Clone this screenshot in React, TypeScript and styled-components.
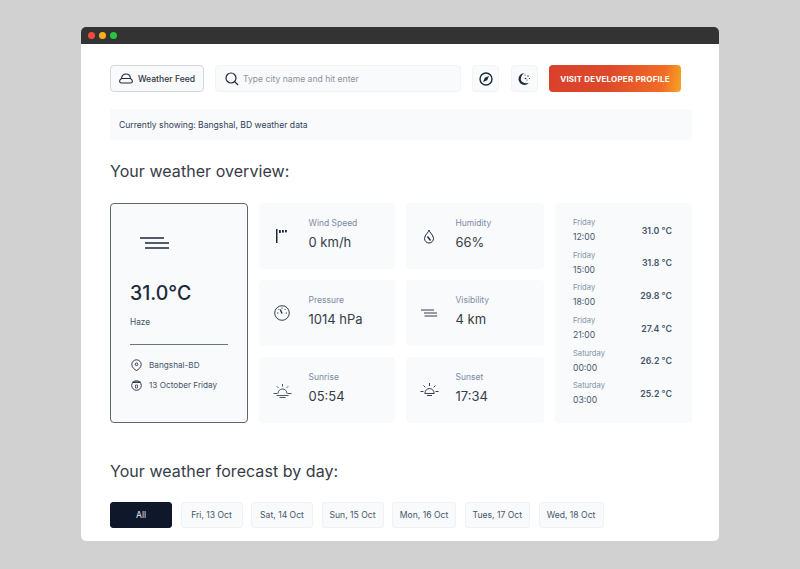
import React from 'react';
import styled, { createGlobalStyle } from 'styled-components';

const GlobalStyle = createGlobalStyle`
  html, body {
    margin: 0;
    padding: 0;
    background: #d1d1d1;
    font-family: Inter, "Liberation Sans", sans-serif;
  }
`;

const Page = styled.div`
  width: 800px;
  height: 569px;
  box-sizing: border-box;
  padding: 27px 81px 28px;
  overflow: hidden;
`;

const Window = styled.div`
  height: 514px;
  background: #fff;
  border-radius: 5px;
  overflow: hidden;
`;

const TitleBar = styled.div`
  height: 17px;
  background: #333333;
  display: flex;
  align-items: center;
  gap: 4px;
  padding-left: 7px;
`;

const Dot = styled.span<{ $color: string }>`
  width: 7px;
  height: 7px;
  border-radius: 50%;
  background: ${p => p.$color};
`;

const Content = styled.div`
  padding: 21px 27px 0 29px;
`;

const Toolbar = styled.div`
  display: flex;
  align-items: stretch;
  height: 27px;
`;

const Brand = styled.div`
  width: 94px;
  box-sizing: border-box;
  display: flex;
  align-items: center;
  justify-content: center;
  gap: 5px;
  background: #f8fafc;
  border: 1px solid #d4d6da;
  border-radius: 4px;
  font-size: 8.6px;
  font-weight: 500;
  color: #2b3442;
  margin-right: 11px;
`;

const SearchBox = styled.div`
  width: 246px;
  box-sizing: border-box;
  display: flex;
  align-items: center;
  gap: 4px;
  padding-left: 9px;
  background: #f8fafc;
  border: 1px solid #f1f3f6;
  border-radius: 4px;
  font-size: 8.6px;
  color: #8b929e;
  margin-right: 11px;
`;

const IconButton = styled.div`
  width: 27px;
  display: flex;
  align-items: center;
  justify-content: center;
  background: #f8fafc;
  border: 1px solid #f1f3f6;
  box-sizing: border-box;
  border-radius: 4px;
  margin-right: 11.5px;
`;

const ProfileButton = styled.div`
  width: 132px;
  display: flex;
  align-items: center;
  justify-content: center;
  border-radius: 4px;
  background: linear-gradient(100deg, #d9402c 0%, #dd4a2a 45%, #f26b26 85%, #f5a623 100%);
  color: #fff;
  font-size: 8px;
  font-weight: 700;
  letter-spacing: 0.2px;
`;

const Notice = styled.div`
  margin-top: 17px;
  height: 31px;
  display: flex;
  align-items: center;
  padding-left: 9px;
  background: #f8fafc;
  border-radius: 3px;
  font-size: 8.6px;
  color: #334155;
`;

const Heading = styled.h2`
  margin: 21px 0 0;
  font-size: 16px;
  line-height: 20px;
  font-weight: 400;
  letter-spacing: 0.05px;
  color: #363c46;
`;

const Overview = styled.div`
  margin-top: 22px;
  display: grid;
  grid-template-columns: 138px 136px 138px 137px;
  grid-template-rows: repeat(3, 66px);
  gap: 11px;
`;

const Hero = styled.div`
  grid-row: 1 / span 3;
  background: #f8fafc;
  border: 1px solid #5f6672;
  border-radius: 4px;
  padding: 33px 19px 0;
  display: flex;
  flex-direction: column;
`;

const HeroIcon = styled.div`
  display: flex;
  padding-left: 10px;
`;

const Temp = styled.div`
  margin-top: 32px;
  font-size: 19.5px;
  line-height: 24px;
  font-weight: 500;
  color: #1e293b;
`;

const Condition = styled.div`
  margin-top: 11px;
  font-size: 8.3px;
  line-height: 12px;
  color: #475569;
`;

const Divider = styled.div`
  margin: 16px 0 7px;
  height: 1px;
  background: #6b7280;
`;

const MetaRow = styled.div`
  margin-top: 6px;
  display: flex;
  align-items: center;
  gap: 7px;
  padding-left: 1px;
  font-size: 8.2px;
  line-height: 14px;
  color: #475569;
`;

const StatCard = styled.div`
  background: #f8fafc;
  border-radius: 4px;
  display: grid;
  grid-template-columns: 49.5px 1fr;
  align-items: center;
`;

const StatIcon = styled.div`
  display: flex;
  justify-content: center;
  padding-right: 3px;
`;

const StatText = styled.div`
  margin-bottom: 5px;
`;

const StatLabel = styled.div`
  font-size: 8.5px;
  line-height: 13px;
  color: #7b8aa3;
`;

const StatValue = styled.div`
  margin-top: 4px;
  font-size: 13px;
  line-height: 16px;
  color: #363c46;
`;

const ForecastCard = styled.div`
  grid-row: 1 / span 3;
  grid-column: 4;
  background: #f8fafc;
  border-radius: 4px;
  padding: 11px 20px 0 18px;
`;

const HourRow = styled.div`
  height: 32.6px;
  display: flex;
  justify-content: space-between;
  align-items: center;
`;

const HourDay = styled.div`
  font-size: 7.6px;
  line-height: 11px;
  color: #8492a6;
`;

const HourTime = styled.div`
  margin-top: 3px;
  font-size: 8.6px;
  line-height: 12px;
  color: #475569;
`;

const HourTemp = styled.div`
  font-size: 8.8px;
  font-weight: 600;
  color: #475569;
`;

const ForecastHeading = styled(Heading)`
  margin-top: 38px;
`;

const Tabs = styled.div`
  margin-top: 21px;
  display: flex;
  gap: 8.5px;
`;

const Tab = styled.div<{ $active?: boolean; $width: number }>`
  width: ${p => p.$width}px;
  height: 26px;
  box-sizing: border-box;
  display: flex;
  align-items: center;
  justify-content: center;
  border-radius: 3px;
  font-size: 8.6px;
  background: ${p => (p.$active ? '#0f172a' : '#f8fafc')};
  color: ${p => (p.$active ? '#e2e8f0' : '#475569')};
  border: 1px solid ${p => (p.$active ? '#0f172a' : '#eef1f5')};
`;

const ink = '#1e293b';

const HazeIcon = ({ size }: { size: 'large' | 'small' }) =>
  size === 'large' ? (
    <svg width="29" height="12" viewBox="0 0 29 12" fill="none" stroke={ink} strokeWidth="1.4">
      <path d="M0 1h24M5 6h24M5 11h24" />
    </svg>
  ) : (
    <svg width="16" height="8" viewBox="0 0 16 8" fill="none" stroke={ink} strokeWidth="0.9">
      <path d="M0 1h13M3 4h13M3.5 7h12.5" />
    </svg>
  );

const WindIcon = () => (
  <svg width="14" height="14" viewBox="0 0 14 14" fill={ink}>
    <rect x="1" y="0" width="1.5" height="14" />
    <rect x="4" y="1" width="1.8" height="3" />
    <rect x="7" y="1" width="1.8" height="2.6" />
    <rect x="10" y="1" width="1.8" height="2.4" />
  </svg>
);

const DropIcon = () => (
  <svg width="12" height="15" viewBox="0 0 12 15" fill="none" stroke={ink} strokeWidth="1">
    <path d="M6 1C6 3 1.5 6 1.5 9.500a4.500 4.500 0 0 0 9 0C10.500 6 6 3 6 1z" />
    <path d="M4.500 7.500L7.500 11.500" strokeWidth="1.4" />
  </svg>
);

const GaugeIcon = () => (
  <svg width="16" height="16" viewBox="0 0 16 16" fill="none" stroke={ink} strokeWidth="0.9">
    <circle cx="8" cy="8" r="7.3" />
    <path d="M8 8.500L6.300 4.500" strokeWidth="1.3" />
    <path d="M8 2.500v1.300M11.500 4l-.8 1M13 8h-1.300M3 8h1.300M4.500 4l.8 1" />
  </svg>
);

const SunriseIcon = () => (
  <svg width="19" height="15" viewBox="0 0 19 15" fill="none" stroke={ink} strokeWidth="0.8">
    <path d="M5 10.500a4.500 4.500 0 0 1 9 0" />
    <path d="M0.500 10.500h4M14.500 10.500h4M3.500 12.500h12M6.500 14.500h6M9.500 1v2.500M3.800 3.300l1.500 1.500M15.200 3.300l-1.500 1.500" />
  </svg>
);

const SunsetIcon = () => (
  <svg width="19" height="16" viewBox="0 0 19 16" fill="none" stroke={ink} strokeWidth="0.9">
    <path d="M5 11a4.500 4.500 0 0 1 9 0" />
    <path d="M0.500 9.500h3M15.500 9.500h3M4.500 11.500h10M7 13.500h5M9.500 1v3M3.500 3.500l1.800 1.800M15.500 3.500l-1.800 1.800" />
  </svg>
);

const CloudIcon = () => (
  <svg width="14" height="11" viewBox="0 0 14 11" fill="none" stroke={ink} strokeWidth="1.1">
    <path d="M2.500 5.500C2.800 3 4.500 1 7 1c2.500 0 4.300 2 4.500 4.500" />
    <path d="M2.500 5.500C1.300 6.300.6 7.300.6 8.200c0 1 .7 1.800 1.900 1.800h9c1.200 0 1.900-.8 1.900-1.800 0-.9-.7-1.900-1.900-2.700z" />
  </svg>
);

const SearchIcon = () => (
  <svg width="14" height="14" viewBox="0 0 14 14" fill="none" stroke={ink} strokeWidth="1.2">
    <circle cx="6" cy="6" r="5" />
    <path d="M9.700 9.700L13 13" />
  </svg>
);

const CompassIcon = () => (
  <svg width="14" height="14" viewBox="0 0 14 14" fill="none" stroke={ink} strokeWidth="1.4">
    <circle cx="7" cy="7" r="6" />
    <path d="M10 4L8.200 8.200 4 10 5.800 5.800z" fill={ink} stroke="none" />
  </svg>
);

const MoonIcon = () => (
  <svg width="14" height="14" viewBox="0 0 14 14" fill={ink}>
    <path d="M7.500 1A6 6 0 0 0 7.500 13C9.300 13 10.700 12.300 11.800 11C7.500 12 3.800 10 3.800 7C3.800 4.500 5.500 2.200 7.500 1z" />
    <circle cx="8" cy="3" r="0.6" />
    <circle cx="11" cy="4" r="0.7" />
    <circle cx="8.500" cy="6.500" r="0.8" />
    <circle cx="12.500" cy="6.500" r="0.6" />
    <circle cx="10" cy="8" r="0.5" />
  </svg>
);

const PinIcon = () => (
  <svg width="11" height="12" viewBox="0 0 11 12" fill="none" stroke={ink} strokeWidth="0.9">
    <path d="M5.500 11.500C3.500 10.500.8 8.500.8 5.500a4.700 4.700 0 0 1 9.400 0c0 3-2.700 5-4.700 6z" />
    <circle cx="5.500" cy="5.300" r="1.3" />
  </svg>
);

const CalendarIcon = () => (
  <svg width="11" height="12" viewBox="0 0 11 12" fill="none" stroke={ink} strokeWidth="0.9">
    <circle cx="5.500" cy="6.500" r="4.800" />
    <path d="M1.500 3.200h8" strokeWidth="1.4" />
    <path d="M4.500 6h2v3h-2z" strokeWidth="0.7" />
  </svg>
);

const stats = [
  { label: 'Wind Speed', value: '0 km/h', icon: <WindIcon /> },
  { label: 'Humidity', value: '66%', icon: <DropIcon /> },
  { label: 'Pressure', value: '1014 hPa', icon: <GaugeIcon /> },
  { label: 'Visibility', value: '4 km', icon: <HazeIcon size="small" /> },
  { label: 'Sunrise', value: '05:54', icon: <SunriseIcon /> },
  { label: 'Sunset', value: '17:34', icon: <SunsetIcon /> },
];

const hours = [
  { day: 'Friday', time: '12:00', temp: '31.0 °C' },
  { day: 'Friday', time: '15:00', temp: '31.8 °C' },
  { day: 'Friday', time: '18:00', temp: '29.8 °C' },
  { day: 'Friday', time: '21:00', temp: '27.4 °C' },
  { day: 'Saturday', time: '00:00', temp: '26.2 °C' },
  { day: 'Saturday', time: '03:00', temp: '25.2 °C' },
];

const days = [
  { label: 'All', width: 62 },
  { label: 'Fri, 13 Oct', width: 62 },
  { label: 'Sat, 14 Oct', width: 62 },
  { label: 'Sun, 15 Oct', width: 62 },
  { label: 'Mon, 16 Oct', width: 64 },
  { label: 'Tues, 17 Oct', width: 65.5 },
  { label: 'Wed, 18 Oct', width: 65 },
];

export default function App() {
  return (
    <Page>
      <GlobalStyle />
      <Window>
        <TitleBar>
          <Dot $color="#f4473f" />
          <Dot $color="#f5b11d" />
          <Dot $color="#27c840" />
        </TitleBar>
        <Content>
          <Toolbar>
            <Brand>
              <CloudIcon />
              Weather Feed
            </Brand>
            <SearchBox>
              <SearchIcon />
              Type city name and hit enter
            </SearchBox>
            <IconButton>
              <CompassIcon />
            </IconButton>
            <IconButton>
              <MoonIcon />
            </IconButton>
            <ProfileButton>VISIT DEVELOPER PROFILE</ProfileButton>
          </Toolbar>
          <Notice>Currently showing: Bangshal, BD weather data</Notice>
          <Heading>Your weather overview:</Heading>
          <Overview>
            <Hero>
              <HeroIcon>
                <HazeIcon size="large" />
              </HeroIcon>
              <Temp>31.0°C</Temp>
              <Condition>Haze</Condition>
              <Divider />
              <MetaRow>
                <PinIcon />
                Bangshal-BD
              </MetaRow>
              <MetaRow>
                <CalendarIcon />
                13 October Friday
              </MetaRow>
            </Hero>
            {stats.map(s => (
              <StatCard key={s.label}>
                <StatIcon>{s.icon}</StatIcon>
                <StatText>
                  <StatLabel>{s.label}</StatLabel>
                  <StatValue>{s.value}</StatValue>
                </StatText>
              </StatCard>
            ))}
            <ForecastCard>
              {hours.map(h => (
                <HourRow key={h.day + h.time}>
                  <div>
                    <HourDay>{h.day}</HourDay>
                    <HourTime>{h.time}</HourTime>
                  </div>
                  <HourTemp>{h.temp}</HourTemp>
                </HourRow>
              ))}
            </ForecastCard>
          </Overview>
          <ForecastHeading>Your weather forecast by day:</ForecastHeading>
          <Tabs>
            {days.map((d, i) => (
              <Tab key={d.label} $active={i === 0} $width={d.width}>
                {d.label}
              </Tab>
            ))}
          </Tabs>
        </Content>
      </Window>
    </Page>
  );
}
